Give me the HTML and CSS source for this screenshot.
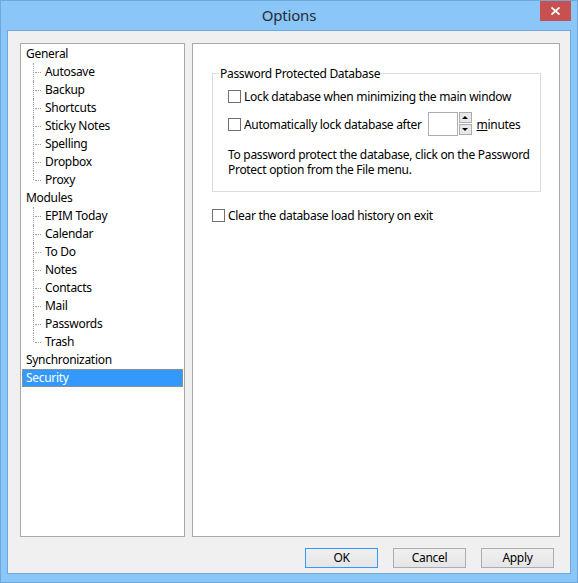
FILE: index.html
```html
<!DOCTYPE html>
<html>
<head>
<meta charset="utf-8">
<link rel="stylesheet" href="styles.css">
</head>
<body>
<div class="window">
  <div class="titlebar">
    <span></span>
    <span class="title">Options</span>
    <span class="close"><svg width="9" height="8" viewBox="0 0 9 8"><path d="M0.5 0.5 L8.5 7.5 M8.5 0.5 L0.5 7.5" stroke="#fff" stroke-width="1.8" fill="none"/></svg></span>
  </div>
  <div class="client">
    <div class="panes">
      <ul class="tree">
        <li class="node">General</li>
        <li class="child">Autosave</li>
        <li class="child">Backup</li>
        <li class="child">Shortcuts</li>
        <li class="child">Sticky Notes</li>
        <li class="child">Spelling</li>
        <li class="child">Dropbox</li>
        <li class="child last">Proxy</li>
        <li class="node">Modules</li>
        <li class="child">EPIM Today</li>
        <li class="child">Calendar</li>
        <li class="child">To Do</li>
        <li class="child">Notes</li>
        <li class="child">Contacts</li>
        <li class="child">Mail</li>
        <li class="child">Passwords</li>
        <li class="child last">Trash</li>
        <li class="node">Synchronization</li>
        <li class="node selected">Security</li>
      </ul>
      <div class="page">
        <fieldset class="group">
          <legend>Password Protected Database</legend>
          <div class="row row1"><span class="check"></span><span>Lock database when minimizing the main window</span></div>
          <div class="row row2"><span class="check"></span><span>Automatically lock database after</span>
            <span class="spin"><span class="spin-edit"></span><span class="spin-btns"><span class="spin-btn"><span class="tri-up"></span></span><span class="spin-btn"><span class="tri-down"></span></span></span></span>
            <span class="minutes"><u>m</u>inutes</span></div>
          <p class="note">To password protect the database, click on the Password Protect option from the File menu.</p>
        </fieldset>
        <div class="row row3"><span class="check"></span><span>Clear the database load history on exit</span></div>
      </div>
    </div>
    <div class="buttons">
      <span class="btn default">OK</span>
      <span class="btn">Cancel</span>
      <span class="btn">Apply</span>
    </div>
  </div>
</div>
</body>
</html>
```
FILE: styles.css
```css
* { box-sizing: border-box; }
html, body { margin: 0; padding: 0; }
body {
  width: 578px; height: 583px; overflow: hidden;
  font-family: "Noto Sans", "Open Sans", sans-serif;
  font-size: 12px;
  letter-spacing: -0.3px;
  color: #000;
}
.window {
  width: 578px; height: 583px;
  background: #8bc6f8;
  border: 1px solid #70a8dc;
  padding: 0 6px 8px 6px;
  display: flex; flex-direction: column;
}
.titlebar {
  height: 29px;
  display: grid;
  grid-template-columns: 1fr auto 1fr;
  align-items: start;
}
.title {
  font-size: 15px;
  color: #262c36;
  line-height: 17px;
  padding-top: 6px;
  letter-spacing: -0.2px;
}
.close {
  justify-self: end;
  width: 31px; height: 20px;
  background: #c75050;
  display: flex; align-items: center; justify-content: center;
}
.close svg { display: block; }
.client {
  flex: 1;
  background: #f0f0f0;
  border: 1px solid #72a7d8;
  padding: 12px 10px 5px 12px;
  display: flex; flex-direction: column;
}
.panes {
  display: flex; gap: 7px;
  height: 494px;
}
.tree {
  list-style: none; margin: 0;
  width: 165px;
  background: #fff;
  border: 1px solid #a9a9a9;
  padding: 1px 1px 0 1px;
}
.tree li {
  height: 18px; line-height: 18px;
  padding-left: 4px;
  white-space: nowrap;
}
.tree li.child {
  position: relative;
  padding-left: 23px;
}
.tree li.child::before {
  content: ""; position: absolute;
  left: 11px; top: 0; bottom: 0;
  border-left: 1px dotted #a0a0a0;
}
.tree li.child.last::before { bottom: 9px; }
.tree li.child::after {
  content: ""; position: absolute;
  left: 13px; top: 9px; width: 6px;
  border-top: 1px dotted #a0a0a0;
}
.tree li.selected {
  background: #3399ff;
  color: #fff;
  outline: 1px dotted #d08a40;
  outline-offset: -1px;
}
.page {
  flex: 1;
  background: #fff;
  border: 1px solid #a9a9a9;
  padding: 22px 0 0 19px;
}
.group {
  margin: 0;
  width: 329px;
  border: 1px solid #dcdcdc;
  padding: 2px 10px 14px 15px;
  min-inline-size: 0;
}
.group legend {
  padding: 0 1px;
  margin-left: -9px;
  line-height: 15px;
}
.row {
  display: flex; align-items: center;
  white-space: nowrap;
}
.row1 { height: 20px; margin-top: 3px; }
.row2 { height: 24px; margin-top: 6px; }
.row3 { height: 20px; margin-top: 13px; }
.check {
  width: 13px; height: 13px;
  border: 1px solid #707070;
  background: #fff;
  margin-right: 3px;
  flex: none;
}
.spin {
  display: flex; margin-left: 6px;
}
.spin-edit {
  width: 30px; height: 24px;
  border: 1px solid #abadb3;
  background: #fff;
}
.spin-btns {
  display: flex; flex-direction: column; gap: 1px;
  margin-left: 1px;
}
.spin-btn {
  width: 13px; height: 11px;
  border: 1px solid #acacac;
  background: #e8e8e8;
  display: flex; align-items: center; justify-content: center;
}
.tri-up, .tri-down {
  width: 0; height: 0;
  border-left: 3px solid transparent;
  border-right: 3px solid transparent;
}
.tri-up { border-bottom: 3px solid #000; }
.tri-down { border-top: 3px solid #000; }
.minutes { margin-left: 5px; }
.note {
  margin: 11px 0 0 0;
  line-height: 15px;
  width: 305px;
}
.buttons {
  display: flex; justify-content: flex-end; gap: 15px;
  margin-top: 11px;
  padding-right: 6px;
}
.btn {
  width: 73px; height: 20px;
  border: 1px solid #adadad;
  background: linear-gradient(#f0f0f0, #e5e5e5);
  display: flex; align-items: center; justify-content: center;
  line-height: 16px;
}
.btn.default { border-color: #3399ff; }
```
